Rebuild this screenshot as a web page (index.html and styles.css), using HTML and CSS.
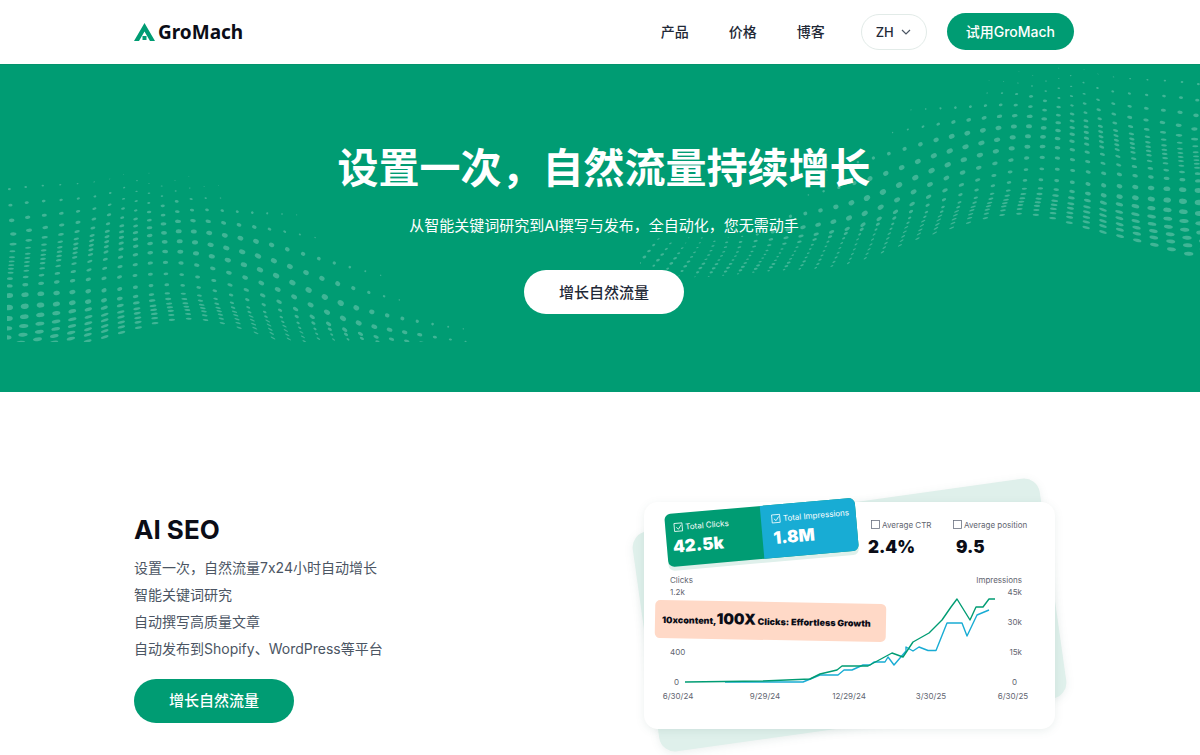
FILE: index.html
```html
<!DOCTYPE html>
<html lang="zh-CN">
<head>
<meta charset="utf-8">
<meta name="viewport" content="width=device-width, initial-scale=1">
<title>GroMach</title>
<link rel="stylesheet" href="styles.css">
</head>
<body>
<header class="site-header">
  <div class="container header-row">
    <a class="logo" href="#">
      <svg class="logo-mark" viewBox="0 0 21 18" aria-hidden="true">
        <path d="M10.500 0 21 18H16L10.500 8.500 5 18H0Z" fill="#009c73"/>
        <rect x="8.500" y="13" width="4" height="4" fill="#009c73"/>
      </svg>
      <span>GroMach</span>
    </a>
    <nav class="nav">
      <a href="#">产品</a>
      <a href="#">价格</a>
      <a href="#">博客</a>
    </nav>
    <div class="lang">
      <select class="lang-select" aria-label="语言">
        <option>ZH</option>
        <option>EN</option>
      </select>
      <svg class="lang-arrow" viewBox="0 0 10 6" aria-hidden="true"><path d="M1 1l4 4 4-4" fill="none" stroke="#4b5563" stroke-width="1.200"/></svg>
    </div>
    <button class="btn btn-small" type="button">试用GroMach</button>
  </div>
</header>

<main>
  <section class="hero">
    <svg class="wave wave-left" viewBox="7 0 473 172" aria-hidden="true"></svg>
    <svg class="wave wave-right" viewBox="0 0 560 220" aria-hidden="true"></svg>
    <div class="container hero-body">
      <h1 class="hero-title">设置一次，自然流量持续增长</h1>
      <p class="hero-sub">从智能关键词研究到AI撰写与发布，全自动化，您无需动手</p>
      <button class="btn btn-white" type="button">增长自然流量</button>
    </div>
  </section>

  <section class="container feature">
    <div class="feature-text">
      <h2 class="feature-title">AI SEO</h2>
      <ul class="feature-list">
        <li>设置一次，自然流量7x24小时自动增长</li>
        <li>智能关键词研究</li>
        <li>自动撰写高质量文章</li>
        <li>自动发布到Shopify、WordPress等平台</li>
      </ul>
      <button class="btn" type="button">增长自然流量</button>
    </div>
    <svg class="report" viewBox="625 470 449 290" role="img" aria-label="Search performance report">
      <g class="soft-shadow"><rect x="644" y="504" width="411" height="222" rx="16" fill="#dff0eb" transform="rotate(-8 849.500 615)"/></g>
      <rect class="soft-shadow" x="644" y="502" width="411" height="227" rx="14" fill="#fff"/>
      <g transform="rotate(-5 761 532)">
        <rect x="666" y="510" width="191" height="53" rx="6" fill="#dff0eb"/>
        <rect x="666" y="506" width="191" height="53" rx="6" fill="#009c73"/>
        <path d="M762 506h89a6 6 0 0 1 6 6v41a6 6 0 0 1-6 6h-89z" fill="#18acd4"/>
        <g fill="none" stroke="#fff" stroke-width="0.800">
          <rect x="675" y="516" width="8" height="8"/><path d="M677 520l2 2 3-4"/>
          <rect x="773" y="516" width="8" height="8"/><path d="M775 520l2 2 3-4"/>
        </g>
        <g fill="#fff">
          <text class="tiny" x="686" y="523">Total Clicks</text>
          <text class="tiny" x="784" y="523">Total Impressions</text>
          <text class="figure" x="672" y="545">42.5k</text>
          <text class="figure" x="773" y="545">1.8M</text>
        </g>
      </g>
      <g fill="none" stroke="#6b7280" stroke-width="0.800">
        <rect x="871.500" y="520.500" width="8" height="8"/>
        <rect x="953.500" y="520.500" width="8" height="8"/>
      </g>
      <g fill="#5f6570">
        <text class="tiny" x="882" y="528">Average CTR</text>
        <text class="tiny" x="964" y="528">Average position</text>
        <text class="tiny" x="670" y="583">Clicks</text>
        <text class="tiny" x="670" y="595">1.2k</text>
        <text class="tiny" x="670" y="655">400</text>
        <text class="tiny" x="674" y="685">0</text>
        <text class="tiny end" x="1022" y="583">Impressions</text>
        <text class="tiny end" x="1022" y="595">45k</text>
        <text class="tiny end" x="1022" y="625">30k</text>
        <text class="tiny end" x="1022" y="655">15k</text>
        <text class="tiny end" x="1017" y="685">0</text>
        <text class="tiny mid" x="678" y="699">6/30/24</text>
        <text class="tiny mid" x="765" y="699">9/29/24</text>
        <text class="tiny mid" x="849" y="699">12/29/24</text>
        <text class="tiny mid" x="931" y="699">3/30/25</text>
        <text class="tiny mid" x="1013" y="699">6/30/25</text>
      </g>
      <g fill="#0b0d17">
        <text class="figure" x="868" y="553">2.4%</text>
        <text class="figure" x="956" y="553">9.5</text>
      </g>
      <g fill="none" stroke-width="1.400" stroke-linejoin="round">
        <path stroke="#18acd4" d="M725 682H803L820 675H838L844 670H852L863 665H870L874 662H885L888 657 894 665 906 651V647L913 651 919 647 928 650.500H936L947 623H962L967 636 977 615 989 610"/>
        <path stroke="#009c73" d="M685 682 763 681 810 679 820 674 837 670 842 666H868L892 653 903 657 913 642 929 633 942 620 951 607 957 599 970 620 976 607H983L989 599H995"/>
      </g>
      <g transform="rotate(1 771 621)">
        <rect x="655" y="602" width="231" height="38" rx="5" fill="#ffd9c7"/>
        <text class="slogan" x="662" y="625" fill="#0b0d17">10xcontent,<tspan class="slogan-big">100X</tspan> Clicks: Effortless Growth</text>
      </g>
    </svg>
  </section>
</main>
<script src="wave.js"></script>
</body>
</html>
```
FILE: styles.css
```css
* { box-sizing: border-box; }

body {
  margin: 0;
  background: #fff;
  color: #1f2937;
  font-family: Inter, "Noto Sans CJK SC", sans-serif;
  font-size: 14px;
}

h1, h2, p, ul { margin: 0; padding: 0; }
button, select { font: inherit; }
a { color: inherit; text-decoration: none; }

.container {
  max-width: 948px;
  margin: 0 auto;
  padding-left: 8px;
}

.site-header { padding: 13px 0 14px; }

.header-row {
  display: flex;
  align-items: center;
}

.logo {
  display: flex;
  align-items: center;
  gap: 3px;
  margin-right: auto;
  padding-top: 1px;
  color: #0b0d17;
  font: 700 19px/24px "Noto Sans", sans-serif;
}

.logo-mark { width: 21px; height: 18px; }

.nav {
  display: flex;
  gap: 40px;
  margin-right: 36px;
  padding-bottom: 2px;
  font-weight: 500;
}

.lang {
  position: relative;
  margin-right: 20px;
}

.lang-select {
  appearance: none;
  width: 66px;
  height: 36px;
  padding: 0 14px;
  border: 1px solid #e2ebe8;
  border-radius: 18px;
  background: #fff;
  color: #1f2937;
  font-size: 13px;
  font-weight: 500;
}

.lang-arrow {
  position: absolute;
  top: 15px;
  right: 16px;
  width: 10px;
  height: 6px;
  pointer-events: none;
}

.btn {
  height: 44px;
  padding: 0 35px 2px;
  border: 0;
  border-radius: 22px;
  background: #009c73;
  color: #fff;
  font-size: 15px;
  font-weight: 500;
  cursor: pointer;
}

.btn-small {
  height: 37px;
  padding: 0 19px 2px;
  font-size: 14px;
}

.btn-white {
  background: #fff;
  color: #1f2937;
}

.hero {
  position: relative;
  overflow: hidden;
  background: #009c73;
  border-top: 1px solid #03936c;
}

.wave { position: absolute; fill: #fff; fill-opacity: 0.25; }
.wave-left { left: 7px; top: 105px; width: 473px; height: 172px; }
.wave-right { right: 0; top: 0; width: 560px; height: 220px; }

.hero-body {
  position: relative;
  display: flex;
  flex-direction: column;
  align-items: center;
  padding-top: 73px;
  padding-bottom: 78px;
  color: #fff;
  text-align: center;
}

.hero-title {
  font-size: 41px;
  line-height: 60px;
  font-weight: 700;
}

.hero-sub {
  margin: 16px 0 32px;
  font-size: 15px;
  line-height: 24px;
}

.feature {
  display: grid;
  grid-template-columns: minmax(0, 1fr) minmax(0, 449px);
  align-items: center;
  padding-top: 78px;
  padding-bottom: 80px;
}

.feature-text { padding-top: 6px; }

.feature-title {
  color: #0b0d17;
  font-size: 26px;
  line-height: 32px;
  font-weight: 700;
}

.feature-list {
  margin: 8px 0 17px;
  color: #4b5563;
  line-height: 27px;
  list-style: none;
}

.report {
  width: 100%;
  overflow: visible;
  font-family: Inter, sans-serif;
}

.soft-shadow { filter: drop-shadow(0 2px 4px rgba(4, 60, 45, 0.08)); }
.tiny { font-size: 8px; }
.mid { text-anchor: middle; }
.end { text-anchor: end; }
.figure { font-size: 17px; font-weight: 900; }
.slogan { font-size: 9px; font-weight: 900; }
.slogan-big { font-size: 15px; }
```
FILE: wave.js
```javascript
// Halftone wave: key columns of dots, bottom to top, joined by smooth curves.
// Each dot is [x, y, rx, ry] in thirds of a pixel.
function column(xs, ys, sizes) {
  return ys.map((y, i) => [xs[i], y, ...sizes[i]]);
}
const rep = (n, v) => Array.from({ length: n }, () => v);

const keys = [
  { at: 0, tilt: -4, dots: column(
    [57,60,62,69,71,73,74,75,76,77,79,80,81,82,83,84,86,87,83,80,77],
    [566,541,518,494,468,440,409,374,344,321,302,288,276,264,251,233,211,181,142,98,51],
    [...rep(5,[14,6]),[13,7],[12,8],[11,7],[9,5],[9,4],...rep(5,[9,3]),[9,3],[10,4],[9,5],[8,5],[6,4],[4,3]]) },
  { at: 5, tilt: -20, dots: column(
    [314,314,314,314,314,313,312,312,312,314,316,318,319,320,321,322,324,327,329,331,329],
    [501,483,468,451,434,413,391,361,325,295,268,246,230,215,200,184,161,134,104,69,27],
    [...rep(5,[12,4]),[11,5],[9,6],[8,6],[8,5],[8,4],...rep(6,[8,4]),[7,4],[7,4],[6,3],[4,3],[2,1]]) },
  { at: 10, tilt: 3, dots: column(
    [566,564,562,559,556,553,550,548,545,543,541,539,536,534,532,530,527,525,523,521,519],
    [446,432,420,410,400,387,371,346,314,279,245,214,184,154,125,94,63,31,0,-30,-60],
    [...rep(6,[9,3]),[8,3],[7,4],[7,4],[8,5],[9,6],[9,6],[9,6],[9,5],[7,4],[6,4],[3,2],[2,1],...rep(3,[0,0])]) },
  { at: 15, tilt: 28, dots: column(
    [819,815,811,807,803,798,794,791,788,784,780,774,768,763,757,750,743,736,729,722,715],
    [504,490,478,465,453,440,426,404,376,339,299,258,214,171,128,85,42,0,-40,-80,-120],
    [...rep(5,[8,2]),[6,3],[6,3],[7,4],[9,5],[9,6],[10,7],[10,7],[9,7],[7,5],[4,4],...rep(6,[0,0])]) },
  { at: 20, tilt: 35, dots: column(
    [1078,1072,1066,1060,1055,1050,1044,1038,1034,1029,1022,1013,1003,991,980,970,960,950,940,930,920],
    [594,581,567,553,538,523,508,493,479,445,399,341,279,213,147,80,20,-40,-100,-160,-220],
    [...rep(5,[5,2]),[5,2],[5,3],[7,4],[9,5],[10,7],[10,8],[8,7],[5,5],[1,1],...rep(7,[0,0])]) },
  { at: 25, tilt: 10, dots: column(
    [1317,1310,1303,1297,1290,1283,1277,1270,1265,1259,1252,1243,1233,1223,1213,1203,1193,1183,1173,1163,1153],
    [617,607,597,586,575,564,552,536,518,494,454,400,340,280,220,160,100,40,-20,-80,-140],
    [[4,2],[6,3],[6,3],[5,2],[4,2],[4,2],[5,2],[7,3],[8,4],[8,5],[5,5],[1,1],...rep(9,[0,0])]) },
  { at: 30, tilt: 15, dots: column(
    [1538,1530,1522,1513,1505,1497,1490,1484,1480,1475,1468,1460,1452,1444,1436,1428,1420,1412,1404,1396,1388],
    [635,622,609,596,583,570,557,543,529,515,480,440,400,360,320,280,240,200,160,120,80],
    [[3,1],[5,3],[6,3],[6,3],[5,2],[5,2],[5,2],[5,2],[4,2],...rep(12,[0,0])]) },
  { at: 34, tilt: 25, dots: column(
    Array.from({ length: 21 }, (_, i) => 1718 - 14 * i),
    Array.from({ length: 21 }, (_, i) => 612 - 18 * i),
    [[2,1],[4,3],[6,4],[6,3],[5,3],[4,2],...rep(15,[0,0])]) }
];

function spline(a, b, c, d, t) {
  return b + 0.5 * t * (c - a + t * (2 * a - 5 * b + 4 * c - d + t * (3 * (b - c) + d - a)));
}

const dots = [];
for (let col = -1; col <= 34; col++) {
  let k = 0;
  while (k < keys.length - 2 && col >= keys[k + 1].at) k++;
  const p = keys[k], q = keys[k + 1];
  const before = keys[k - 1], after = keys[k + 2];
  const t = (col - p.at) / (q.at - p.at);
  for (let row = 0; row < 21; row++) {
    const v = [0, 1].map(n => {
      const b = p.dots[row][n], c = q.dots[row][n];
      const a = before ? before.dots[row][n] : 2 * b - c;
      const d = after ? after.dots[row][n] : 2 * c - b;
      return spline(a, b, c, d, t);
    });
    const size = [2, 3].map(n => p.dots[row][n] + (q.dots[row][n] - p.dots[row][n]) * t);
    if (size[0] < 1.2 || size[1] < 0.8) continue;
    dots.push({ x: v[0] / 3, y: v[1] / 3, rx: size[0] / 3, ry: size[1] / 3, tilt: p.tilt + (q.tilt - p.tilt) * t });
  }
}

function draw(svg, list) {
  svg.innerHTML = list.map(d =>
    `<ellipse rx="${d.rx.toFixed(2)}" ry="${d.ry.toFixed(2)}" transform="translate(${d.x.toFixed(1)} ${d.y.toFixed(1)}) rotate(${d.tilt.toFixed(0)})"/>`
  ).join("");
}

draw(document.querySelector(".wave-left"), dots);
draw(document.querySelector(".wave-right"), dots.map(d => ({ ...d, x: 567.7 - d.x, tilt: -d.tilt })));
```
